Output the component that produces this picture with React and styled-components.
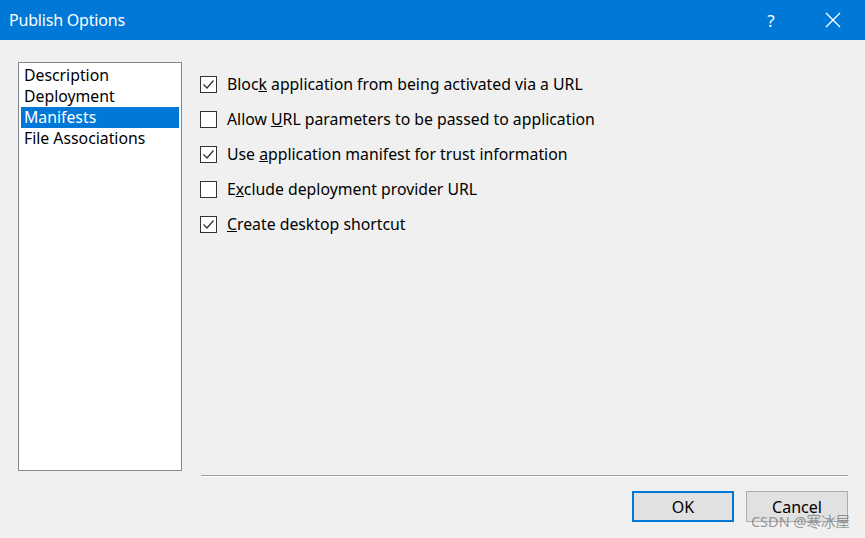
import React from "react";
import styled, { createGlobalStyle } from "styled-components";

const Global = createGlobalStyle`
  html, body { margin: 0; padding: 0; }
  body { background: #f0f0f0; font-family: "Segoe UI", "Noto Sans", "Open Sans", sans-serif; }
`;

const Window = styled.div`
  width: 865px;
  height: 538px;
  display: flex;
  flex-direction: column;
  background: #f0f0f0;
  position: relative;
  overflow: hidden;
`;

const TitleBar = styled.div`
  height: 40px;
  background: #0078d7;
  display: flex;
  align-items: center;
  padding-left: 9px;
  color: #fff;
  flex-shrink: 0;
`;

const Title = styled.div`
  font-size: 16px;
  flex: 1;
  letter-spacing: -0.2px;
`;

const TitleButton = styled.div`
  width: ${p => p.w}px;
  height: 40px;
  display: flex;
  align-items: center;
  justify-content: center;
  font-size: 17px;
`;

const Body = styled.div`
  flex: 1;
  display: flex;
  flex-direction: column;
  padding: 22px 17px 0 18px;
`;

const Main = styled.div`
  display: flex;
  gap: 18px;
`;

const ListBox = styled.div`
  width: 158px;
  height: 403px;
  border: 1px solid #828790;
  background: #fff;
  padding: 2px 2px;
  box-sizing: content-box;
`;

const ListItem = styled.div`
  height: 21px;
  line-height: 21px;
  font-size: 15.8px;
  padding-left: 3px;
  color: ${p => (p.selected ? "#fff" : "#000")};
  background: ${p => (p.selected ? "#0078d7" : "transparent")};
`;

const Options = styled.div`
  display: flex;
  flex-direction: column;
  gap: 17px;
  padding-top: 13px;
`;

const OptionRow = styled.div`
  display: flex;
  align-items: center;
  gap: 10px;
  height: 18px;
  font-size: 15.8px;
  color: #000;
`;

const Box = styled.div`
  width: 15px;
  height: 15px;
  border: 1px solid #333;
  background: #fff;
  display: flex;
  align-items: center;
  justify-content: center;
`;

const Footer = styled.div`
  display: flex;
  flex-direction: column;
  align-items: flex-end;
`;

const Separator = styled.div`
  width: 647px;
  height: 1px;
  background: #a0a0a0;
  border-bottom: 1px solid #fff;
  margin-top: 4px;
`;

const Buttons = styled.div`
  display: flex;
  gap: 12px;
  margin-top: 14px;
`;

const Button = styled.div`
  width: 102px;
  height: 31px;
  box-sizing: border-box;
  border: ${p => (p.primary ? "2px solid #0078d7" : "1px solid #adadad")};
  background: #e1e1e1;
  display: flex;
  align-items: center;
  justify-content: center;
  font-size: 16px;
  color: #000;
`;

const Watermark = styled.div`
  position: absolute;
  right: 15px;
  bottom: 7px;
  font-size: 14.5px;
  color: rgba(120, 120, 120, 0.75);
  font-family: "Noto Sans", "Noto Sans CJK SC", sans-serif;
`;

const Check = () => (
  <svg width="13" height="13" viewBox="0 0 13 13">
    <path d="M1.5 6.5 L5 10 L11.5 2.5" fill="none" stroke="#333" strokeWidth="1.3" />
  </svg>
);

const options = [
  { checked: true, pre: "Bloc", u: "k", post: " application from being activated via a URL" },
  { checked: false, pre: "Allow ", u: "U", post: "RL parameters to be passed to application" },
  { checked: true, pre: "Use ", u: "a", post: "pplication manifest for trust information" },
  { checked: false, pre: "E", u: "x", post: "clude deployment provider URL" },
  { checked: true, pre: "", u: "C", post: "reate desktop shortcut" },
];

export default function App() {
  return (
    <>
      <Global />
      <Window>
        <TitleBar>
          <Title>Publish Options</Title>
          <TitleButton w={60}>?</TitleButton>
          <TitleButton w={64}>
            <svg width="16" height="16" viewBox="0 0 16 16">
              <path d="M1 1 L15 15 M15 1 L1 15" stroke="#fff" strokeWidth="1.4" />
            </svg>
          </TitleButton>
        </TitleBar>
        <Body>
          <Main>
            <ListBox>
              <ListItem>Description</ListItem>
              <ListItem>Deployment</ListItem>
              <ListItem selected>Manifests</ListItem>
              <ListItem>File Associations</ListItem>
            </ListBox>
            <Options>
              {options.map((o, i) => (
                <OptionRow key={i}>
                  <Box>{o.checked && <Check />}</Box>
                  <span>
                    {o.pre}
                    <u>{o.u}</u>
                    {o.post}
                  </span>
                </OptionRow>
              ))}
            </Options>
          </Main>
          <Footer>
            <Separator />
            <Buttons>
              <Button primary>OK</Button>
              <Button>Cancel</Button>
            </Buttons>
          </Footer>
        </Body>
        <Watermark>CSDN @寒冰屋</Watermark>
      </Window>
    </>
  );
}
